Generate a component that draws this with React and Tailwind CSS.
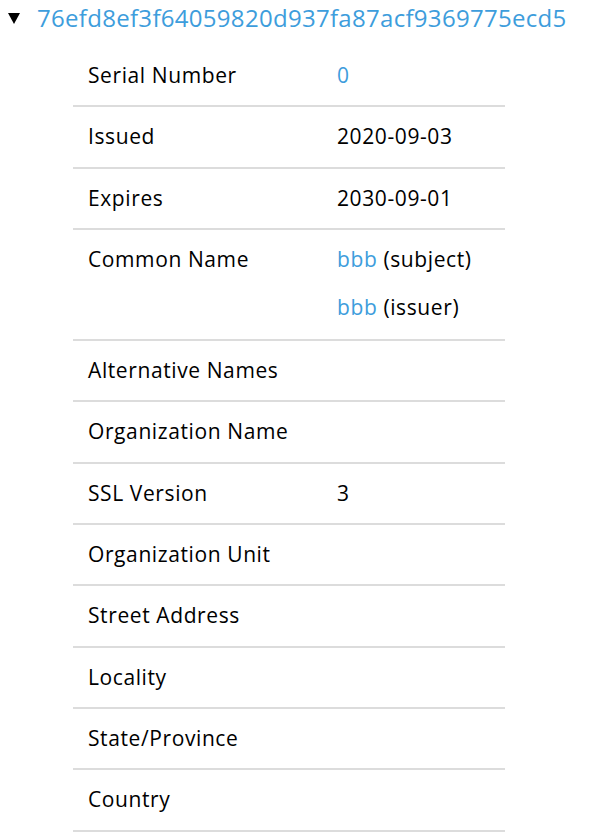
const rows = [
  { label: "Serial Number", values: [{ link: "0" }] },
  { label: "Issued", values: [{ text: "2020-09-03" }] },
  { label: "Expires", values: [{ text: "2030-09-01" }] },
  {
    label: "Common Name",
    values: [
      { link: "bbb", text: " (subject)" },
      { link: "bbb", text: " (issuer)" },
    ],
  },
  { label: "Alternative Names", values: [] },
  { label: "Organization Name", values: [] },
  { label: "SSL Version", values: [{ text: "3" }] },
  { label: "Organization Unit", values: [] },
  { label: "Street Address", values: [] },
  { label: "Locality", values: [] },
  { label: "State/Province", values: [] },
  { label: "Country", values: [] },
];

export default function App() {
  return (
    <div className="bg-white text-black font-['Open_Sans',sans-serif] text-[21px] tracking-[0.6px] w-[600px] h-[834px] overflow-hidden">
      <div className="flex items-center h-[36px]">
        <span className="w-[37px] pl-[8px] flex">
          <svg width="12" height="11" viewBox="0 0 12 11">
            <path d="M0 0 L12 0 L6 11 Z" fill="#000" />
          </svg>
        </span>
        <span className="text-[#3d9ddc] text-[24px] tracking-[0.3px]">
          76efd8ef3f64059820d937fa87acf9369775ecd5
        </span>
      </div>
      <div className="ml-[73px] w-[432px] mt-[10px]">
        {rows.map((row) => (
          <div key={row.label} className="flex border-b-2 border-[#dcdcdc] py-[6px]">
            <div className="w-[264px] pl-[15px] h-[47.3px] leading-[47.3px]">{row.label}</div>
            <div>
              {row.values.map((v, i) => (
                <div key={i} className={i === 0 ? "h-[47.3px] leading-[47.3px]" : "h-[50px] leading-[48px]"}>
                  {v.link && <span className="text-[#3d9ddc]">{v.link}</span>}
                  {v.text}
                </div>
              ))}
            </div>
          </div>
        ))}
      </div>
    </div>
  );
}
